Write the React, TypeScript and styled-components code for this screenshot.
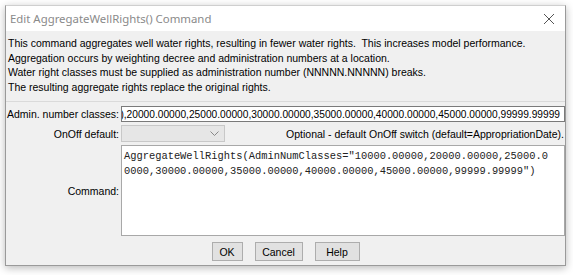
import React from "react";
import styled, { createGlobalStyle } from "styled-components";

const Global = createGlobalStyle`
  html, body { margin: 0; padding: 0; background: #ffffff; }
  body { font-family: "Liberation Sans", Arial, sans-serif; }
`;

const Page = styled.div`
  width: 573px;
  height: 275px;
  padding: 5px 0 0 5px;
  box-sizing: border-box;
`;

const Window = styled.div`
  width: 561px;
  height: 261px;
  box-sizing: border-box;
  border: 1px solid #9a9a9a;
  border-top-color: #cfcfcf;
  background: #f0f0f0;
  box-shadow: 0 2px 8px rgba(0, 0, 0, 0.28);
  display: flex;
  flex-direction: column;
`;

const TitleBar = styled.div`
  height: 25px;
  background: #ffffff;
  display: flex;
  align-items: center;
  justify-content: space-between;
  padding: 0 10px 0 4px;
`;

const Title = styled.span`
  font-family: "Noto Sans", "Liberation Sans", sans-serif;
  font-size: 11.4px;
  color: #8a8a8a;
`;

const Close = styled.svg`
  width: 12px;
  height: 12px;
`;

const Body = styled.div`
  flex: 1;
  display: flex;
  flex-direction: column;
  font-size: 10.5px;
  color: #000;
`;

const Description = styled.div`
  padding: 5px 0 0 2px;
  line-height: 14.7px;
  height: 65px;
`;

const Line = styled.div`
  white-space: pre;
`;

const Form = styled.div`
  border-top: 1px solid #dadada;
  display: grid;
  grid-template-columns: 113px 1fr;
  column-gap: 2px;
  row-gap: 3px;
  padding: 4px 0 0 0;
`;

const Label = styled.div`
  text-align: right;
  align-self: center;
  white-space: nowrap;
`;

const TextField = styled.div`
  height: 16px;
  box-sizing: border-box;
  border: 1px solid #7a7a7a;
  background: #fff;
  display: flex;
  justify-content: flex-end;
  align-items: center;
  overflow: hidden;
  white-space: nowrap;
  padding-right: 4px;
  font-size: 10.2px;
`;

const ComboRow = styled.div`
  display: flex;
  align-items: center;
  justify-content: space-between;
`;

const Combo = styled.div`
  width: 104px;
  height: 17px;
  box-sizing: border-box;
  border: 1px solid #c8c8c8;
  background: #e6e6e6;
  display: flex;
  justify-content: flex-end;
  align-items: center;
  padding-right: 5px;
`;

const Hint = styled.span`
  white-space: nowrap;
  padding-right: 1px;
`;

const TextArea = styled.div`
  height: 91px;
  box-sizing: border-box;
  border: 1px solid #a8a8a8;
  background: #fff;
  padding: 3px 2px;
  font-family: "Liberation Mono", "Courier New", monospace;
  font-size: 10.4px;
  line-height: 15px;
  white-space: pre;
  color: #222;
`;

const Buttons = styled.div`
  display: flex;
  justify-content: center;
  gap: 12px;
  padding: 6px 0 0 0;
`;

const Button = styled.button<{ $w: number }>`
  width: ${(p) => p.$w}px;
  height: 19px;
  box-sizing: border-box;
  border: 1px solid #adadad;
  background: #e1e1e1;
  font-family: "Liberation Sans", Arial, sans-serif;
  font-size: 10.5px;
  color: #000;
  padding: 0;
`;

export default function App() {
  return (
    <>
      <Global />
      <Page>
        <Window>
          <TitleBar>
            <Title>Edit AggregateWellRights() Command</Title>
            <Close viewBox="0 0 12 12">
              <path d="M1 1 L11 11 M11 1 L1 11" stroke="#555" strokeWidth="1" />
            </Close>
          </TitleBar>
          <Body>
            <Description>
              <Line>This command aggregates well water rights, resulting in fewer water rights.  This increases model performance.</Line>
              <Line>Aggregation occurs by weighting decree and administration numbers at a location.</Line>
              <Line>Water right classes must be supplied as administration number (NNNNN.NNNNN) breaks.</Line>
              <Line>The resulting aggregate rights replace the original rights.</Line>
            </Description>
            <Form>
              <Label>Admin. number classes:</Label>
              <TextField>),20000.00000,25000.00000,30000.00000,35000.00000,40000.00000,45000.00000,99999.99999</TextField>
              <Label>OnOff default:</Label>
              <ComboRow>
                <Combo>
                  <svg width="9" height="6" viewBox="0 0 9 6">
                    <path d="M0.5 0.5 L4.5 4.5 L8.5 0.5" fill="none" stroke="#888" strokeWidth="1" />
                  </svg>
                </Combo>
                <Hint>Optional - default OnOff switch (default=AppropriationDate).</Hint>
              </ComboRow>
              <Label>Command:</Label>
              <TextArea>{`AggregateWellRights(AdminNumClasses="10000.00000,20000.00000,25000.0\n0000,30000.00000,35000.00000,40000.00000,45000.00000,99999.99999")`}</TextArea>
            </Form>
            <Buttons>
              <Button $w={31}>OK</Button>
              <Button $w={48}>Cancel</Button>
              <Button $w={45}>Help</Button>
            </Buttons>
          </Body>
        </Window>
      </Page>
    </>
  );
}
